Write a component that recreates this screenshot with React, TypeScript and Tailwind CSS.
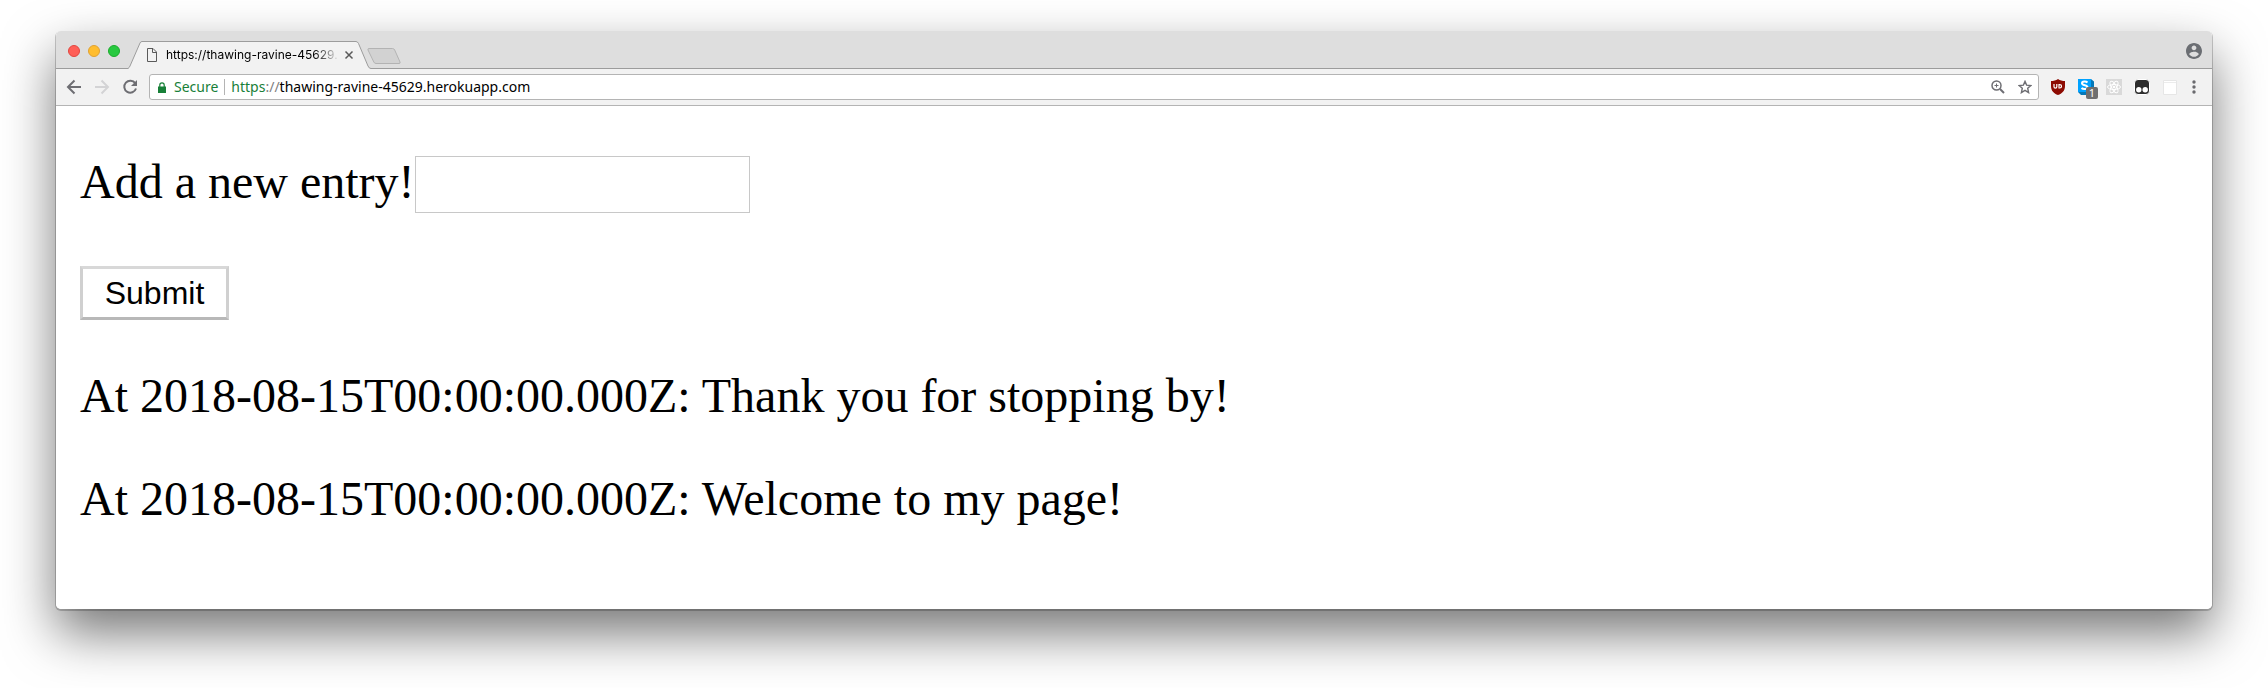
const entries = [
  { at: '2018-08-15T00:00:00.000Z', text: 'Thank you for stopping by!' },
  { at: '2018-08-15T00:00:00.000Z', text: 'Welcome to my page!' },
];

function TabStrip() {
  return (
    <header className="flex h-[38px] items-end bg-[#dedede] shadow-[inset_0_-1px_0_#9c9c9c]">
      <div className="flex h-9 items-center gap-2 self-start pt-1 pl-3">
        <button type="button" aria-label="Close" className="size-3 rounded-full border border-[#e2463f] bg-[#ff5f57]" />
        <button type="button" aria-label="Minimise" className="size-3 rounded-full border border-[#e0a132] bg-[#ffbd2e]" />
        <button type="button" aria-label="Zoom" className="size-3 rounded-full border border-[#1bac2c] bg-[#28c940]" />
      </div>
      <div className="relative ml-2 h-7 w-[243px]">
        <svg className="absolute inset-0" width="243" height="28" viewBox="0 0 243 28" aria-hidden="true">
          <path d="M0 27.5 C1 27 1.500 26 2 25 L12 2 Q12.700 .5 14 .5 H228 Q229.500 .5 230.500 2.500 L240 25 Q241 27.500 243 27.500 V28 H0Z" fill="#f2f2f2" />
          <path d="M0 27.5 C1 27 1.500 26 2 25 L12 2 Q12.700 .5 14 .5 H228 Q229.500 .5 230.500 2.500 L240 25 Q241 27.500 243 27.500" fill="none" stroke="#9c9c9c" />
        </svg>
        <div className="relative flex h-7 items-center pr-4 pl-[19px]">
          <svg width="10" height="14" viewBox="0 0 10 14" fill="none" stroke="#5a5a5a" aria-hidden="true">
            <path d="M.5 .5H6L9.500 4V13.500H.5Z M5.500 .5V4.500H9.500" />
          </svg>
          <span className="ml-[9px] w-[174px] bg-linear-to-r from-black from-85% to-transparent to-100% bg-clip-text font-[Inter] text-[12px] leading-4 whitespace-nowrap text-transparent">
            https://thawing-ravine-45629.
          </span>
          <button type="button" aria-label="Close tab" className="ml-1">
            <svg width="10" height="10" viewBox="0 0 10 10" stroke="#5a5a5a" strokeWidth="1.500">
              <path d="M1.500 1.500L8.500 8.500M8.500 1.500L1.500 8.500" />
            </svg>
          </button>
        </div>
      </div>
      <button type="button" aria-label="New tab" className="-ml-1 self-end pb-1">
        <svg width="34" height="17" viewBox="0 0 34 17" fill="#d2d2d2" stroke="#b3b3b3">
          <path d="M2 .5H25.500Q27 .5 27.700 2L33 14Q33.600 15.500 32 15.500H9Q7.500 15.500 6.800 14L1 2Q.5 .5 2 .5Z" />
        </svg>
      </button>
      <button type="button" aria-label="Profile" className="mr-2.5 mb-2.5 ml-auto">
        <svg width="16" height="16" viewBox="2 2 20 20" fill="#6b6e73">
          <path d="M12 2C6.480 2 2 6.480 2 12s4.480 10 10 10 10-4.480 10-10S17.520 2 12 2zm0 3c1.660 0 3 1.340 3 3s-1.340 3-3 3-3-1.340-3-3 1.340-3 3-3zm0 14.200c-2.500 0-4.710-1.280-6-3.220.03-1.990 4-3.080 6-3.080 1.990 0 5.970 1.090 6 3.080-1.290 1.940-3.500 3.220-6 3.220z" />
        </svg>
      </button>
    </header>
  );
}

function Toolbar() {
  return (
    <nav className="flex h-[37px] items-center border-b border-[#b4b4b4] bg-[#f2f2f2] pl-[10px] font-['Noto_Sans']">
      <button type="button" aria-label="Back">
        <svg width="16" height="16" viewBox="0 0 16 16" fill="none" stroke="#6e6e73" strokeWidth="2">
          <path d="M15 8H2.500M8.500 1.500L2 8L8.500 14.500" />
        </svg>
      </button>
      <button type="button" aria-label="Forward" className="ml-3">
        <svg width="16" height="16" viewBox="0 0 16 16" fill="none" stroke="#d3d3d5" strokeWidth="2">
          <path d="M1 8H13.500M7.500 1.500L14 8L7.500 14.500" />
        </svg>
      </button>
      <button type="button" aria-label="Reload" className="ml-3">
        <svg width="16" height="16" viewBox="0 0 16 16" fill="none" stroke="#6e6e73" strokeWidth="2">
          <path d="M13.200 4.200A6 6 0 1 0 14 9.500" />
          <path d="M15 1V7H9Z" fill="#6e6e73" stroke="none" />
        </svg>
      </button>
      <div className="ml-[11px] flex h-[26px] min-w-0 flex-1 items-center rounded-[3px] border border-[#b4b4b4] bg-white text-[14px] leading-5">
        <svg className="ml-2 shrink-0" width="8" height="11" viewBox="0 0 8 11" aria-hidden="true">
          <path d="M0 4.500H8V11H0Z" fill="#188038" />
          <path d="M1.800 5V3A2.200 2.200 0 0 1 6.200 3V5" fill="none" stroke="#188038" strokeWidth="1.200" />
        </svg>
        <span className="ml-2 text-[#188038]">Secure</span>
        <span className="mx-1.5 h-4 w-px bg-[#b4b4b4]" />
        <a href="https://thawing-ravine-45629.herokuapp.com" className="text-black">
          <span className="text-[#188038]">https</span>
          <span className="text-[#808080]">://</span>thawing-ravine-45629.herokuapp.com
        </a>
        <button type="button" aria-label="Zoom level" className="ml-auto">
          <svg width="14" height="14" viewBox="0 0 14 14" fill="none" stroke="#6e6e73" strokeWidth="1.500">
            <circle cx="5.500" cy="5.500" r="4.500" />
            <path d="M9 9L13 13" strokeWidth="2" />
            <path d="M3.500 5.500H7.500M5.500 3.500V7.500" strokeWidth="1" />
          </svg>
        </button>
        <button type="button" aria-label="Bookmark" className="mr-1.5 ml-[13px]">
          <svg width="14" height="14" viewBox="0 0 14 14" fill="none" stroke="#6e6e73" strokeWidth="1.400">
            <path d="M7 1.400L8.600 5.100L12.800 5.500L9.700 8.200L10.600 12.600L7 10.300L3.400 12.600L4.300 8.200L1.200 5.500L5.400 5.100Z" />
          </svg>
        </button>
      </div>
      <Extensions />
    </nav>
  );
}

function Extensions() {
  return (
    <div className="ml-3 flex items-center">
      <button type="button" aria-label="Content blocker">
        <svg width="14" height="16" viewBox="0 0 14 16">
          <path d="M7 0C5 1.500 2.500 2 0 2V7C0 12 3 14.500 7 16C11 14.500 14 12 14 7V2C11.500 2 9 1.500 7 0Z" fill="#8d0b02" />
          <path d="M3 5V7.800A1.400 1.400 0 0 0 5.800 7.800V5" fill="none" stroke="#fff" strokeWidth="1.200" />
          <path d="M8 5.600H8.800A1.700 1.700 0 0 1 8.800 9H8Z" fill="none" stroke="#fff" strokeWidth="1.200" />
        </svg>
      </button>
      <button type="button" aria-label="Stylus" className="relative ml-[13px]">
        <svg width="16" height="16" viewBox="1 1 16 16">
          <path d="M1 1H14L17 3.500V17H4L1 14Z" fill="#0478b8" />
          <path d="M1 1H14V14H1Z" fill="#00a2ff" />
          <path d="M10.500 4.500C9 3 5 3 5 5.200C5 8 10.500 6.500 10.500 9.300C10.500 11.500 6 11.500 4.500 10" fill="none" stroke="#fff" strokeWidth="2" />
        </svg>
        <span className="absolute top-2 left-2 flex size-3 items-center justify-center rounded-xs bg-[#6f6f6f] text-[11px] leading-3 text-white">1</span>
      </button>
      <button type="button" aria-label="React tools" className="ml-3">
        <svg width="16" height="16" viewBox="0 0 16 16">
          <path d="M0 0H16V16H0Z" fill="#d9d9d9" />
          <g fill="none" stroke="#fff">
            <ellipse cx="8" cy="8" rx="6.500" ry="2.500" />
            <ellipse cx="8" cy="8" rx="6.500" ry="2.500" transform="rotate(60 8 8)" />
            <ellipse cx="8" cy="8" rx="6.500" ry="2.500" transform="rotate(120 8 8)" />
          </g>
          <circle cx="8" cy="8" r="1.300" fill="#fff" />
        </svg>
      </button>
      <button type="button" aria-label="Tampermonkey" className="ml-3">
        <svg width="16" height="16" viewBox="0 0 16 16">
          <rect x=".5" y=".5" width="15" height="15" rx="3.500" fill="#2d2d2d" stroke="#fff" />
          <circle cx="4.800" cy="10.800" r="2.700" fill="#fff" />
          <circle cx="11.200" cy="10.800" r="2.700" fill="#fff" />
        </svg>
      </button>
      <button type="button" aria-label="Page extension" className="ml-[13px]">
        <svg width="14" height="15" viewBox="0 0 14 15">
          <path d="M.5 .5H13.500V14.500H.5Z" fill="#fff" stroke="#e6e6e6" />
          <path d="M1 2.500H13" stroke="#ececec" />
        </svg>
      </button>
      <button type="button" aria-label="Menu" className="mr-4 ml-[15px]">
        <svg width="4" height="14" viewBox="0 0 4 14" fill="#6a6a6e">
          <circle cx="2" cy="2" r="1.700" />
          <circle cx="2" cy="7" r="1.700" />
          <circle cx="2" cy="12" r="1.700" />
        </svg>
      </button>
    </div>
  );
}

export default function App() {
  return (
    <div className="overflow-hidden bg-white px-14 pt-[31px] pb-20">
      <div className="rounded-[5px] shadow-[0_1px_0_1px_rgba(0,0,0,0.2),0_24px_52px_rgba(0,0,0,0.54)]">
        <div className="overflow-hidden rounded-[5px] bg-white">
          <TabStrip />
          <Toolbar />
          <main className="px-6 pt-[50px] pb-[83px] font-['Liberation_Serif',serif] text-[48px] leading-[55px] text-black">
            <form onSubmit={(event) => event.preventDefault()}>
              <div className="flex items-start">
                <label htmlFor="entry" className="leading-[51px]">Add a new entry!</label>
                <input
                  id="entry"
                  type="text"
                  className="h-[57px] w-[335px] border border-[#c8c8c8] bg-white px-1 font-['Liberation_Sans',sans-serif] text-[32px] outline-none"
                />
              </div>
              <button
                type="submit"
                className="mt-[53px] block h-[54px] w-[149px] border-3 border-[#d0d0d0] border-t-[#d8d8d8] border-b-[#b8b8b8] bg-white font-['Liberation_Sans',sans-serif] text-[32px] leading-[48px]"
              >
                Submit
              </button>
            </form>
            {entries.map((entry) => (
              <p key={entry.text} className="mt-12">
                At {entry.at}: {entry.text}
              </p>
            ))}
          </main>
        </div>
      </div>
    </div>
  );
}
